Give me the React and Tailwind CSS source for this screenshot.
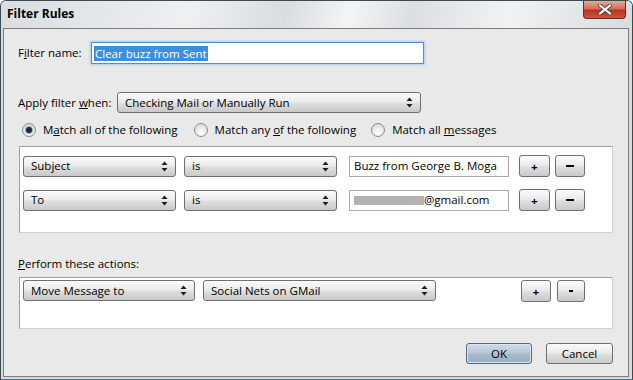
import React from "react";

const font = "font-['Open_Sans',sans-serif]";

const Arrows = () => (
  <svg width="7" height="11" viewBox="0 0 7 11" className="shrink-0">
    <path d="M3.5 0.5 L6.5 4 L0.5 4 Z" fill="#1a1a1a" />
    <path d="M3.5 10.5 L6.5 7 L0.5 7 Z" fill="#1a1a1a" />
  </svg>
);

const Select = ({ width, label }) => (
  <div
    className={`${width} h-[21px] shrink-0 flex items-center justify-between pl-[7px] pr-[7px] border border-[#707070] rounded-[3px] bg-[linear-gradient(#fbfbfb,#ececec_45%,#dedede_55%,#c9c9c9)] shadow-[inset_0_1px_0_#ffffff]`}
  >
    <span className="leading-none">{label}</span>
    <Arrows />
  </div>
);

const SmallButton = ({ width, children }) => (
  <div
    className={`${width} h-[22px] shrink-0 flex items-center justify-center border border-[#707070] rounded-[3px] bg-[linear-gradient(#fbfbfb,#ececec_45%,#dedede_55%,#c9c9c9)] shadow-[inset_0_1px_0_#ffffff]`}
  >
    {children}
  </div>
);

const Radio = ({ checked }) => (
  <span className="w-[14px] h-[14px] shrink-0 rounded-full border border-[#8c8c8c] bg-[radial-gradient(circle_at_50%_70%,#ffffff,#e4e4e4_60%,#cfcfcf)] flex items-center justify-center">
    {checked && (
      <span className="w-[6px] h-[6px] rounded-full bg-[#1e2b38] shadow-[0_0_0_1px_#8fb3d1]" />
    )}
  </span>
);

const RuleRow = ({ field, value }) => (
  <div className="flex items-center">
    <Select width="w-[153px]" label={field} />
    <div className="ml-[8px]">
      <Select width="w-[153px]" label="is" />
    </div>
    <div className="ml-[12px] w-[160px] h-[21px] shrink-0 border border-[#a9a9a9] bg-white flex items-center pl-[4px] leading-none">
      {value}
    </div>
    <div className="ml-[10px]">
      <SmallButton width="w-[31px]">
        <span className="font-bold text-[11px] leading-none">+</span>
      </SmallButton>
    </div>
    <div className="ml-[5px]">
      <SmallButton width="w-[30px]">
        <span className="w-[8px] h-[1.5px] bg-black" />
      </SmallButton>
    </div>
  </div>
);

export default function App() {
  return (
    <div
      className={`${font} text-[11.5px] text-black w-[633px] h-[380px] flex flex-col bg-[#d7dce1] border border-[#3e4a52] border-b-[#1c8a99] rounded-t-[6px] overflow-hidden`}
    >
      {/* Title bar */}
      <div className="h-[27px] shrink-0 flex items-start justify-between pl-[6px] pr-[6px] bg-[linear-gradient(105deg,#d9dde1_0%,#eef0f2_30%,#d9dde0_45%,#f3f4f5_55%,#dcdfe2_65%,#f1f2f3_80%,#d8dcdf_100%)]">
        <span className="mt-[4px] font-bold text-[12px]">Filter Rules</span>
        <div className="w-[43px] h-[18px] flex items-center justify-center rounded-b-[4px] border border-t-0 border-[#6b2a20] bg-[linear-gradient(#e8a898,#d56f5b_45%,#b8321c_55%,#d0553a)]">
          <svg width="14" height="11" viewBox="0 0 14 11">
            <path
              d="M2 1.5 L12 9.5 M12 1.5 L2 9.5"
              stroke="#4a4a4a"
              strokeWidth="4"
              strokeLinecap="round"
            />
            <path
              d="M2 1.5 L12 9.5 M12 1.5 L2 9.5"
              stroke="#ffffff"
              strokeWidth="2.2"
              strokeLinecap="round"
            />
          </svg>
        </div>
      </div>

      {/* Dialog body */}
      <div className="flex-1 ml-[2px] mr-[3px] mb-[2px] border border-[#7d7d7d] bg-[#e9e9e9] flex flex-col pl-[15px] pr-[15px] pt-[13px]">
        {/* Filter name */}
        <div className="flex items-center h-[22px]">
          <span className="w-[73px] ml-[-1px]">
            F<span className="underline">i</span>lter name:
          </span>
          <div className="w-[333px] h-[22px] border border-[#4d8fcf] shadow-[0_0_2px_1px_#a5cdf2] bg-white flex items-center pl-[2px]">
            <span className="bg-[#3b8fe0] text-white leading-[15px] px-[1px]">
              Clear buzz from Sent
            </span>
          </div>
        </div>

        {/* Apply filter when */}
        <div className="flex items-center mt-[28px]">
          <span className="w-[99px] ml-[-1px]">
            Apply filter <span className="underline">w</span>hen:
          </span>
          <Select width="w-[304px]" label="Checking Mail or Manually Run" />
        </div>

        {/* Match radios */}
        <div className="flex items-center mt-[9px] h-[16px] ml-[3px]">
          <Radio checked />
          <span className="ml-[7px]">
            M<span className="underline">a</span>tch all of the following
          </span>
          <span className="ml-[16px]">
            <Radio />
          </span>
          <span className="ml-[7px]">
            Match any <span className="underline">o</span>f the following
          </span>
          <span className="ml-[15px]">
            <Radio />
          </span>
          <span className="ml-[7px]">
            Match all <span className="underline">m</span>essages
          </span>
        </div>

        {/* Rules list */}
        <div className="mt-[8px] h-[87px] border border-[#a0a0a0] border-b-[#d0d0d0] border-r-[#d0d0d0] bg-white flex flex-col gap-[12px] pt-[8px] pl-[3px]">
          <RuleRow field="Subject" value="Buzz from George B. Moga" />
          <RuleRow
            field="To"
            value={
              <span className="flex items-center">
                <span className="w-[70px] h-[9px] bg-[#b3b3b3]" />
                <span>@gmail.com</span>
              </span>
            }
          />
        </div>

        {/* Actions */}
        <div className="mt-[24px] h-[14px] flex items-center">
          <span className="ml-[-1px]">
            <span className="underline">P</span>erform these actions:
          </span>
        </div>
        <div className="mt-[6px] h-[52px] border border-[#a0a0a0] border-b-[#d0d0d0] border-r-[#d0d0d0] bg-white flex items-start pt-[2px] pl-[3px]">
          <Select width="w-[172px]" label="Move Message to" />
          <div className="ml-[8px]">
            <Select width="w-[233px]" label="Social Nets on GMail" />
          </div>
          <div className="ml-[85px]">
            <SmallButton width="w-[30px]">
              <span className="font-bold text-[11px] leading-none">+</span>
            </SmallButton>
          </div>
          <div className="ml-[6px]">
            <SmallButton width="w-[28px]">
              <span className="w-[4px] h-[1.5px] bg-black" />
            </SmallButton>
          </div>
        </div>

        {/* Buttons */}
        <div className="mt-[14px] flex justify-end gap-[14px]">
          <div className="w-[66px] h-[21px] flex items-center justify-center border border-[#55667a] rounded-[3px] bg-[linear-gradient(#cfdbe6,#b8c8d7_45%,#a6b9cb_55%,#9bb0c4)] shadow-[inset_0_0_0_1px_#dce6ef]">
            OK
          </div>
          <div className="w-[67px] h-[21px] flex items-center justify-center border border-[#707070] rounded-[3px] bg-[linear-gradient(#fbfbfb,#ececec_45%,#dedede_55%,#c9c9c9)] shadow-[inset_0_1px_0_#ffffff]">
            Cancel
          </div>
        </div>
      </div>
    </div>
  );
}
